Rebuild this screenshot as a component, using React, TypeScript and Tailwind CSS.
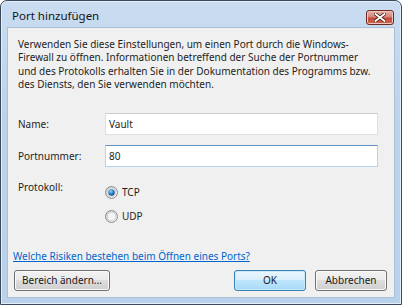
import React from "react";

const font = { fontFamily: '"Noto Sans", "Open Sans", sans-serif' };

function Radio({ checked }: { checked: boolean }) {
  const gid = checked ? "rg1" : "rg0";
  return (
    <svg width="13" height="13" viewBox="0 0 13 13" className="shrink-0">
      <defs>
        <linearGradient id={gid} x1="0" y1="0" x2="1" y2="1">
          <stop offset="0" stopColor="#cbcbcb" />
          <stop offset="1" stopColor="#f7f7f7" />
        </linearGradient>
        <radialGradient id="dot" cx="0.4" cy="0.35" r="0.7">
          <stop offset="0" stopColor="#9ad6ff" />
          <stop offset="0.5" stopColor="#2a8ad4" />
          <stop offset="1" stopColor="#0b3c6e" />
        </radialGradient>
      </defs>
      <circle cx="6.5" cy="6.5" r="6" fill={`url(#${gid})`} stroke="#8e8f8f" strokeWidth="1" />
      <circle cx="6.5" cy="6.5" r="4.3" fill="#f4f4f4" stroke="#c8c8c8" strokeWidth="0.8" />
      {checked && <circle cx="6.5" cy="6.5" r="3.2" fill="url(#dot)" />}
    </svg>
  );
}

function Btn({ children, w, def }: { children: React.ReactNode; w: string; def?: boolean }) {
  return (
    <div
      className={`${w} h-[21px] rounded-[3px] border flex items-center justify-center text-[#1a1a1a] ${
        def
          ? "border-[#3c7fb1] bg-[linear-gradient(#eaf6fd_0%,#d9f0fc_45%,#bee6fd_50%,#a7d9f5_100%)] shadow-[inset_0_0_0_1px_#c6ecfc]"
          : "border-[#707070] bg-[linear-gradient(#f2f2f2_0%,#ebebeb_45%,#dddddd_50%,#cfcfcf_100%)] shadow-[inset_0_0_0_1px_#fbfbfb]"
      }`}
    >
      {children}
    </div>
  );
}

export default function App() {
  return (
    <div className="w-[403px] h-[306px] bg-white" style={font}>
      <div className="w-[402px] h-[305px] rounded-t-[7px] border border-[#3a4a5c] bg-[linear-gradient(#c9dcf1,#bcd3ec_40%,#b9d1ea)] shadow-[inset_0_0_0_1px_#e4eef9] flex flex-col px-[6px] pb-[6px]">
        <div className="h-[26px] flex items-center relative shrink-0">
          <span className="pl-[5px] pt-[4px] text-[11.5px] text-[#141414]">Port hinzufügen</span>
          <div className="absolute right-[1px] top-[9px] w-[28px] h-[15px] rounded-[3px] border border-[#6b2a22] bg-[linear-gradient(#e8b0a7,#d8877b_45%,#c2473a_55%,#cf6a4e)] shadow-[inset_0_0_0_1px_#f0c4bc] flex items-center justify-center">
            <svg width="12" height="9" viewBox="0 0 12 9">
              <path d="M1.5 1 L10.5 8 M10.5 1 L1.5 8" stroke="#3b1b16" strokeWidth="3.4" strokeLinecap="square" />
              <path d="M1.5 1 L10.5 8 M10.5 1 L1.5 8" stroke="#ffffff" strokeWidth="1.8" strokeLinecap="square" />
            </svg>
          </div>
        </div>
        <div className="flex-1 bg-[#f0f0f0] border border-[#a9c0d9] flex flex-col text-[10px] text-[#1e1e1e] leading-[13.33px]">
          <p className="pl-[10px] pt-[10px] whitespace-nowrap">
            Verwenden Sie diese Einstellungen, um einen Port durch die Windows-
            <br />
            Firewall zu öffnen. Informationen betreffend der Suche der Portnummer
            <br />
            und des Protokolls erhalten Sie in der Dokumentation des Programms bzw.
            <br />
            des Diensts, den Sie verwenden möchten.
          </p>
          <div className="flex items-center mt-[22px] pl-[10px]">
            <span className="w-[87px]">Name:</span>
            <div className="w-[273px] h-[22px] bg-white border border-[#dcdfe4] border-t-[#c9cdd3] flex items-center px-[3px]">Vault</div>
          </div>
          <div className="flex items-center mt-[10px] pl-[10px]">
            <span className="w-[87px]">Portnummer:</span>
            <div className="w-[273px] h-[22px] bg-white border border-[#b6d3ea] border-t-[#5c93c6] flex items-center px-[3px]">80</div>
          </div>
          <div className="flex mt-[14px] pl-[10px]">
            <span className="w-[87px]">Protokoll:</span>
            <div className="flex flex-col gap-[10px] pt-[5px]">
              <label className="flex items-center gap-[4px]">
                <Radio checked />
                <span>TCP</span>
              </label>
              <label className="flex items-center gap-[4px]">
                <Radio checked={false} />
                <span>UDP</span>
              </label>
            </div>
          </div>
          <div className="mt-[27px] pl-[5px]">
            <span className="text-[#0066cc] underline">Welche Risiken bestehen beim Öffnen eines Ports?</span>
          </div>
          <div className="mt-auto mb-[6px] flex items-center pl-[6px] pr-[7px]">
            <Btn w="w-[96px]">Bereich ändern...</Btn>
            <div className="flex-1" />
            <Btn w="w-[72px]" def>OK</Btn>
            <div className="w-[9px]" />
            <Btn w="w-[72px]">Abbrechen</Btn>
          </div>
        </div>
      </div>
    </div>
  );
}
